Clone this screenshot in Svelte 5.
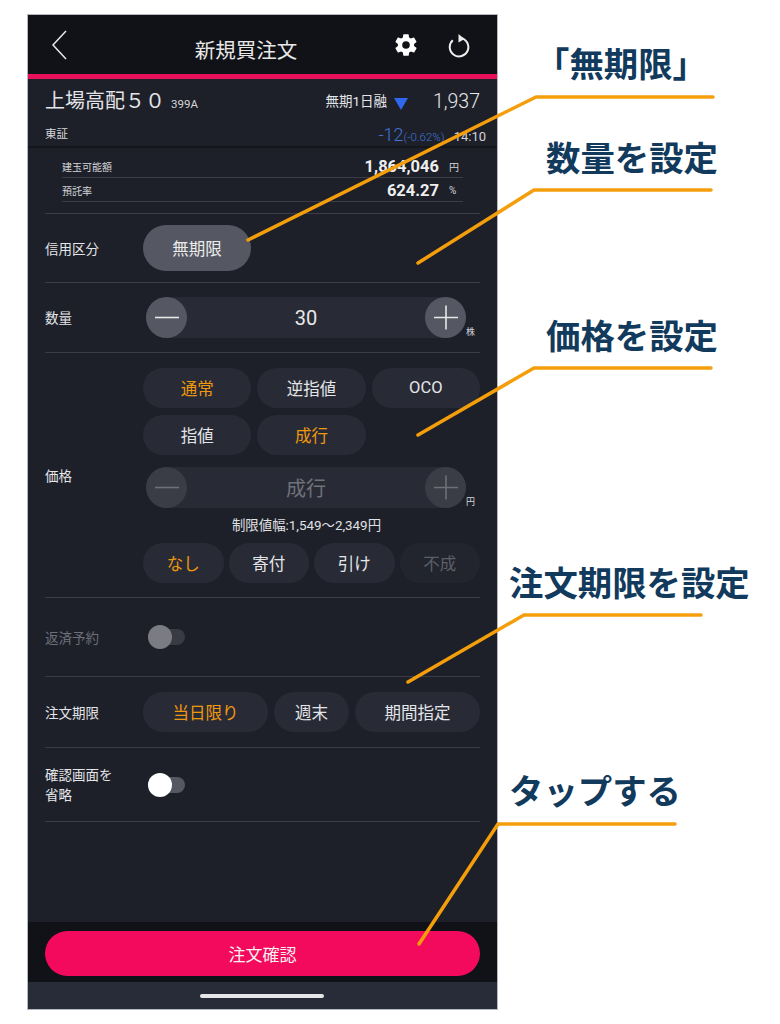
<script>
	const notes = [
		{ text: '「無期限」', cls: 'n1' },
		{ text: '数量を設定', cls: 'n2' },
		{ text: '価格を設定', cls: 'n3' },
		{ text: '注文期限を設定', cls: 'n4' },
		{ text: 'タップする', cls: 'n5' }
	];
	const lines = [
		'248,240 536,97 713,97',
		'418,263 534,190 711,190',
		'418,435 534,368 711,368',
		'408,682 524,615 701,615',
		'419,944 498,824 675,824'
	];
</script>

{#snippet stepper(value, unit, off)}
	<div class="stepper-wrap">
		<div class="stepper" class:off>
			<span class="round">
				<svg viewBox="0 0 41 41" width="41" height="41"><path d="M9 20.500H33" /></svg>
			</span>
			<span class="value">{value}</span>
			<span class="round">
				<svg viewBox="0 0 41 41" width="41" height="41"><path d="M9 20.500H33M21 8.500V32.500" /></svg>
			</span>
		</div>
		<span class="unit">{unit}</span>
	</div>
{/snippet}

{#snippet toggle(off)}
	<div class="toggle" class:off>
		<span class="track"></span>
		<span class="knob"></span>
	</div>
{/snippet}

<div class="page">
	<div class="phone">
		<header class="top">
			<svg class="back" viewBox="0 0 16 30" width="16" height="30"><path d="M15 1L2 15L15 29" /></svg>
			<h1>新規買注文</h1>
			<svg class="gear" viewBox="0 0 24 24" width="26" height="26">
				<path d="M19.400 13c.04-.33.060-.66.060-1s-.02-.67-.060-1l2.100-1.650c.19-.15.24-.42.12-.64l-2-3.460c-.12-.22-.38-.3-.61-.22l-2.490 1c-.52-.4-1.080-.73-1.690-.98l-.38-2.650A.49.49 0 0 0 14 2h-4c-.25 0-.46.18-.49.420l-.38 2.650c-.61.25-1.170.59-1.690.98l-2.490-1c-.23-.09-.49 0-.61.220l-2 3.460c-.13.220-.07.49.12.640L4.570 11c-.04.33-.07.67-.07 1s.03.67.07 1l-2.110 1.650c-.19.150-.24.420-.12.640l2 3.460c.12.220.38.3.61.220l2.490-1c.52.4 1.080.73 1.690.98l.38 2.650c.03.240.24.420.49.420h4c.25 0 .46-.18.49-.42l.38-2.650c.61-.25 1.170-.59 1.690-.98l2.490 1c.23.090.49 0 .61-.22l2-3.460c.12-.22.070-.49-.12-.64zM12 15.500a3.500 3.500 0 1 1 0-7 3.500 3.500 0 0 1 0 7z" fill="#fff" />
			</svg>
			<svg class="reload" viewBox="0 0 24 24" width="24" height="24">
				<path d="M6.800 6.200A9.300 9.300 0 1 0 14.500 3.900" fill="none" stroke="#eee" stroke-width="2" />
				<path d="M12.500 0L18.500 5L12.500 8.500Z" fill="#eee" />
			</svg>
		</header>
		<div class="pink"></div>

		<section class="stock">
			<div class="stock-a">
				<span class="name">上場高配５０</span>
				<span class="code">399A</span>
				<span class="margin">無期1日融</span>
				<span class="tri"></span>
				<span class="price">1,937</span>
			</div>
			<div class="stock-b">
				<span class="market">東証</span>
				<span class="change">-12<small>(-0.62%)</small></span>
				<span class="time">14:10</span>
			</div>
		</section>

		<main class="form">
			<div class="balance">
				<div class="bal-row"><span>建玉可能額</span><b>1,864,046</b><i>円</i></div>
				<div class="bal-row"><span>預託率</span><b>624.27</b><i>%</i></div>
			</div>

			<div class="row r-credit">
				<span class="label">信用区分</span>
				<div class="field"><button class="pill active-grey w108">無期限</button></div>
			</div>

			<div class="row r-qty">
				<span class="label">数量</span>
				<div class="field">{@render stepper('30', '株', false)}</div>
			</div>

			<div class="row r-price">
				<span class="label">価格</span>
				<div class="field stack">
					<div class="btns three">
						<button class="pill on">通常</button>
						<button class="pill">逆指値</button>
						<button class="pill latin">OCO</button>
					</div>
					<div class="btns three second">
						<button class="pill">指値</button>
						<button class="pill on">成行</button>
					</div>
					<div class="gap-s">{@render stepper('成行', '円', true)}</div>
					<p class="limit">制限値幅:1,549～2,349円</p>
					<div class="btns four">
						<button class="pill on">なし</button>
						<button class="pill">寄付</button>
						<button class="pill">引け</button>
						<button class="pill dis">不成</button>
					</div>
				</div>
			</div>

			<div class="row r-repay">
				<span class="label dim">返済予約</span>
				<div class="field">{@render toggle(true)}</div>
			</div>

			<div class="row r-term">
				<span class="label">注文期限</span>
				<div class="field term">
					<button class="pill on">当日限り</button>
					<button class="pill">週末</button>
					<button class="pill">期間指定</button>
				</div>
			</div>

			<div class="row r-skip">
				<span class="label">確認画面を<br />省略</span>
				<div class="field">{@render toggle(false)}</div>
			</div>
		</main>

		<div class="foot">
			<button class="confirm">注文確認</button>
		</div>
		<div class="home"><span></span></div>
	</div>

	<svg class="callouts" viewBox="0 0 780 1024" width="780" height="1024">
		{#each lines as pts}
			<polyline points={pts} />
		{/each}
	</svg>
	{#each notes as n}
		<div class="note {n.cls}">{n.text}</div>
	{/each}
</div>

<style>
	:global(body) {
		margin: 0;
		background: #fff;
	}
	.page {
		position: relative;
		width: 780px;
		height: 1024px;
		padding: 15px 0 0 28px;
		box-sizing: border-box;
		background: #fff;
		overflow: hidden;
		font-family: 'Roboto', 'Noto Sans CJK JP', sans-serif;
	}
	.phone {
		width: 469px;
		height: 994px;
		display: flex;
		flex-direction: column;
		background: #1d2029;
		color: #e4e5e8;
		outline: 1px solid #b4b7bd;
	}
	button {
		font-family: inherit;
		border: none;
		padding: 0;
	}

	.top {
		height: 59px;
		flex: none;
		position: relative;
		display: flex;
		align-items: center;
		background: #111217;
	}
	.top h1 {
		box-sizing: border-box;
		margin: 9px 0 0 0;
		width: 100%;
		padding-right: 33px;
		text-align: center;
		font-size: 20.500px;
		font-weight: 400;
		color: #e8e8e8;
	}
	.back {
		position: absolute;
		left: 23px;
		top: 15px;
		fill: none;
		stroke: #e8e8e8;
		stroke-width: 1.500;
	}
	.gear {
		position: absolute;
		left: 365px;
		top: 17px;
	}
	.reload {
		position: absolute;
		left: 418px;
		top: 19px;
	}
	.pink {
		height: 5px;
		flex: none;
		background: #e8105a;
	}

	.stock {
		height: 69px;
		flex: none;
		box-sizing: border-box;
		padding: 6px 17px 0;
		border-bottom: 2px solid #14161c;
	}
	.stock-a {
		display: flex;
		align-items: baseline;
		height: 28px;
	}
	.name {
		font-size: 20px;
		width: 118px;
		white-space: nowrap;
	}
	.code {
		font-size: 11.500px;
		margin-left: 8px;
		color: #d4d5d9;
	}
	.margin {
		font-size: 13.500px;
		margin-left: auto;
		position: relative;
		top: -2px;
	}
	.tri {
		width: 0;
		height: 0;
		margin-left: 7px;
		border-left: 7px solid transparent;
		border-right: 7px solid transparent;
		border-top: 12px solid #2f68ee;
		align-self: center;
		position: relative;
		top: 5px;
	}
	.price {
		font-size: 19.500px;
		font-weight: 300;
		margin-left: 25px;
		color: #e8e9ec;
	}
	.stock-b {
		display: flex;
		align-items: baseline;
		margin-top: 11px;
	}
	.market {
		font-size: 11.500px;
		font-weight: 400;
		position: relative;
		top: -3px;
		color: #d4d5d9;
	}
	.change {
		margin-left: auto;
		font-size: 18px;
		font-weight: 300;
		color: #4274d4;
	}
	.change small {
		font-size: 11.500px;
	}
	.time {
		font-size: 13px;
		margin: 0 -6px 0 9px;
		color: #d4d5d9;
	}

	.form {
		flex: 1;
		padding: 0 17px;
	}
	.balance {
		height: 66px;
		box-sizing: border-box;
		padding: 7px 17px 0;
		border-bottom: 1px solid #3a3d49;
	}
	.bal-row {
		display: flex;
		align-items: center;
		height: 22px;
		margin-bottom: 1px;
		border-bottom: 1px solid #3a3d49;
		font-size: 10px;
		color: #d4d5d9;
	}
	.bal-row b {
		margin-left: auto;
		font-size: 16.500px;
		font-weight: 700;
		color: #eee;
	}
	.bal-row i {
		width: 10px;
		margin: 0 4px 0 10px;
		font-style: normal;
		font-size: 10px;
	}

	.row {
		display: flex;
		align-items: center;
		box-sizing: border-box;
		border-bottom: 1px solid #3a3d49;
	}
	.r-credit { height: 69px; }
	.r-qty { height: 70px; }
	.r-price { height: 245px; }
	.r-repay { height: 79px; }
	.r-term { height: 71px; }
	.r-skip { height: 74px; }

	.label {
		width: 98px;
		flex: none;
		padding-top: 1px;
		font-size: 13.500px;
		line-height: 20px;
		color: #e4e5e8;
	}
	.label.dim {
		color: #6c6f78;
	}
	.field {
		flex: 1;
		min-width: 0;
	}

	.pill {
		height: 40px;
		border-radius: 20px;
		background: #282b36;
		color: #e4e5e8;
		font-size: 16.500px;
		text-align: center;
	}
	.pill.on {
		color: #ee980e;
	}
	.pill.dis {
		background: #22252e;
		color: #5c5f68;
	}
	.active-grey {
		background: #555762;
		color: #ececec;
		height: 46px;
		border-radius: 23px;
	}
	.w108 {
		width: 108px;
	}

	.stack {
		display: flex;
		flex-direction: column;
	}
	.btns {
		display: grid;
		gap: 6px;
	}
	.three {
		grid-template-columns: repeat(3, 1fr);
	}
	.second {
		margin-top: 7px;
	}
	.four {
		grid-template-columns: repeat(4, 1fr);
		gap: 5px;
	}
	.gap-s {
		margin-top: 12px;
	}
	.limit {
		margin: 8px 0 9px;
		text-align: center;
		font-size: 13.400px;
		line-height: 18px;
		color: #e0e1e4;
		position: relative;
		top: 1px;
		left: -5px;
	}
	.term {
		display: grid;
		grid-template-columns: 125px 75px 125px;
		gap: 6px 6px;
		justify-content: space-between;
	}

	.stepper-wrap {
		display: flex;
		align-items: flex-end;
		margin-left: 3px;
	}
	.stepper {
		width: 320px;
		height: 41px;
		flex: none;
		display: flex;
		align-items: center;
		justify-content: space-between;
		border-radius: 21px;
		background: #282b36;
	}
	.round {
		width: 41px;
		height: 41px;
		border-radius: 50%;
		background: #555762;
		display: block;
	}
	.round svg {
		display: block;
		fill: none;
		stroke: #e8e8e8;
		stroke-width: 1.600;
	}
	.value {
		font-size: 20px;
		color: #e8e8e8;
	}
	.stepper.off .round {
		background: #3a3c46;
	}
	.stepper.off .round svg {
		stroke: #6e7078;
	}
	.stepper.off .value {
		color: #70727a;
	}
	.unit {
		font-size: 9px;
		line-height: 12px;
		margin-left: 0;
		color: #d4d5d9;
	}

	.toggle {
		position: relative;
		width: 37px;
		height: 24px;
		margin-left: 5px;
		display: flex;
		align-items: center;
	}
	.track {
		display: block;
		width: 100%;
		height: 16px;
		border-radius: 8px;
		background: #555762;
	}
	.knob {
		position: absolute;
		left: 0;
		top: 0;
		width: 24px;
		height: 24px;
		border-radius: 50%;
		background: #fff;
	}
	.toggle.off .track {
		background: #383a44;
	}
	.toggle.off .knob {
		background: #7b7c83;
	}

	.foot {
		height: 60px;
		flex: none;
		box-sizing: border-box;
		padding: 9px 17px 0;
		background: #111217;
	}
	.confirm {
		width: 100%;
		height: 45px;
		border-radius: 23px;
		background: #f40a5c;
		color: #f6f0f2;
		font-size: 17px;
	}
	.home {
		height: 27px;
		flex: none;
		display: flex;
		align-items: flex-start;
		justify-content: center;
		background: #282c38;
	}
	.home span {
		display: block;
		width: 124px;
		height: 4px;
		margin: 12px 1px 0 0;
		border-radius: 2px;
		background: #e6e6e8;
	}

	.callouts {
		position: absolute;
		left: 0;
		top: 0;
		fill: none;
		stroke: #f59e0b;
		stroke-width: 3.500;
		stroke-linecap: round;
		stroke-linejoin: round;
		pointer-events: none;
	}
	.note {
		position: absolute;
		font-size: 34.400px;
		font-weight: 700;
		line-height: 40px;
		white-space: nowrap;
		color: #123a5c;
		font-family: 'Noto Sans CJK JP', sans-serif;
	}
	.n1 { left: 535px; top: 42px; }
	.n2 { left: 546px; top: 136px; }
	.n3 { left: 546px; top: 314px; }
	.n4 { left: 509px; top: 561px; }
	.n5 { left: 509px; top: 769px; }
</style>
